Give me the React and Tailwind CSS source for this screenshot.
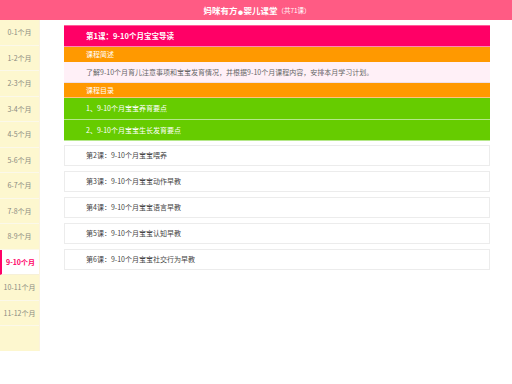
import React from "react";

const months = ["0-1个月","1-2个月","2-3个月","3-4个月","4-5个月","5-6个月","6-7个月","7-8个月","8-9个月","9-10个月","10-11个月","11-12个月"];
const lessons = ["第2课：9-10个月宝宝喂养","第3课：9-10个月宝宝动作早教","第4课：9-10个月宝宝语言早教","第5课：9-10个月宝宝认知早教","第6课：9-10个月宝宝社交行为早教"];

export default function App() {
  return (
    <div className="w-[512px] h-[384px] bg-white overflow-hidden" style={{ fontFamily: '"Noto Sans CJK SC", "Noto Sans", sans-serif' }}>
      <div className="h-[20px] bg-[#ff5b84] flex items-center justify-center text-white pl-[2px]">
        <span className="text-[8.5px] font-bold leading-none">妈咪有方<span className="inline-block w-[6px] text-center text-[5px] align-middle">●</span>婴儿课堂</span>
        <span className="text-[6.5px] leading-none">（共71课）</span>
      </div>
      <div className="flex">
        <div className="w-[40px] shrink-0 bg-[#fdf7cf] border-r border-[#fbf3dd]">
          {months.map((m, i) => {
            const active = m === "9-10个月";
            return active ? (
              <div key={i} className="h-[25.5px] flex items-center justify-center bg-white border-l-[2px] border-[#ff0066] border-b border-b-[#f6f0d8] text-[#ff0066] font-bold text-[7px]">{m}</div>
            ) : (
              <div key={i} className="h-[25.5px] flex items-center justify-center border-b border-[#fbf8ea] text-[#8a8a80] text-[7px]">{m}</div>
            );
          })}
          <div className="h-[25px]"></div>
        </div>
        <div className="ml-[24px] mt-[5px] w-[426px] flex flex-col">
          <div className="h-[22px] bg-[#ff0066] border-b border-[#ff86b6] border-t border-t-[#ff5c99] flex items-center pl-[22px] text-white font-bold text-[7.5px]">第1课：9-10个月宝宝导读</div>
          <div className="h-[15px] bg-[#ff9900] flex items-center pl-[22px] text-white text-[7px]">课程简述</div>
          <div className="h-[21px] bg-[#fff0f7] border-b border-[#eee0e6] flex items-center pl-[22px] text-[#666] text-[7px]">了解9-10个月育儿注意事项和宝宝发育情况，并根据9-10个月课程内容，安排本月学习计划。</div>
          <div className="h-[15px] bg-[#ff9900] border-b border-[#ffc080] flex items-center pl-[22px] text-white text-[7px]">课程目录</div>
          <div className="h-[22px] bg-[#66cc00] border-b border-[#b5e88a] flex items-center pl-[22px] text-white text-[7px]">1、9-10个月宝宝养育要点</div>
          <div className="h-[21px] bg-[#66cc00] border-b border-[#b5e88a] flex items-center pl-[22px] text-white text-[7px]">2、9-10个月宝宝生长发育要点</div>
          <div className="mt-[4px] flex flex-col gap-[5px]">
            {lessons.map((l, i) => (
              <div key={i} className="h-[21px] border border-[#ececec] bg-white flex items-center pl-[21px] text-[#444] text-[7px]">{l}</div>
            ))}
          </div>
        </div>
      </div>
    </div>
  );
}
